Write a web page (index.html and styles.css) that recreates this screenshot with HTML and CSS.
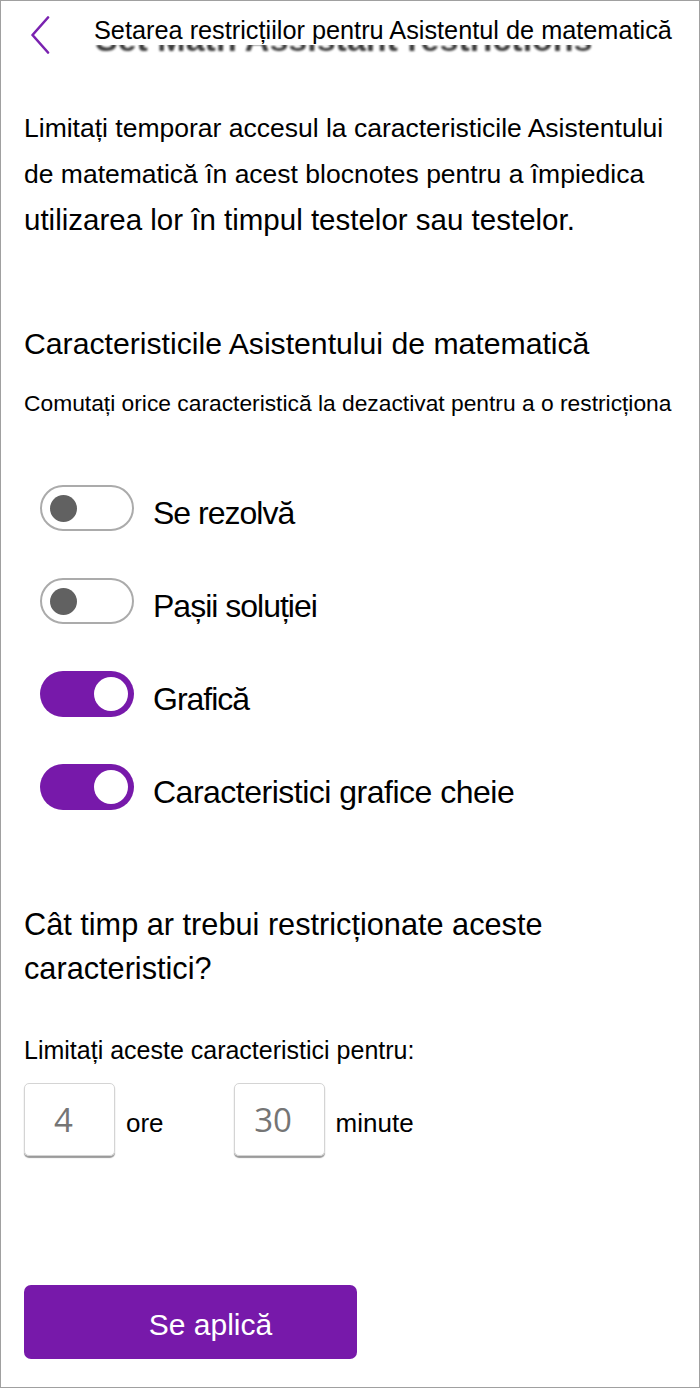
FILE: index.html
```html
<!DOCTYPE html>
<html lang="ro">
<head>
<meta charset="utf-8">
<title>Setarea restricțiilor pentru Asistentul de matematică</title>
<link rel="stylesheet" href="styles.css">
</head>
<body>
<div class="frame">
  <header class="header">
    <svg class="back" width="22" height="38" viewBox="0 0 22 38" aria-hidden="true">
      <path d="M19 1.5 L3.5 19 L19 36.5" fill="none" stroke="#7a22b0" stroke-width="2.6" stroke-linecap="round" stroke-linejoin="round"/>
    </svg>
    <div class="title-wrap">
      <span class="ghost" aria-hidden="true">Set Math Assistant restrictions</span>
      <h1 class="title">Setarea restricțiilor pentru Asistentul de matematică</h1>
    </div>
  </header>

  <main class="content">
    <p class="intro">Limitați temporar accesul la caracteristicile Asistentului de matematică în acest blocnotes pentru a împiedica <span class="intro-tail">utilizarea lor în timpul testelor sau testelor.</span></p>

    <h2 class="section-title">Caracteristicile Asistentului de matematică</h2>
    <p class="section-sub">Comutați orice caracteristică la dezactivat pentru a o restricționa</p>

    <ul class="toggles">
      <li class="toggle-row"><span class="toggle off"><span class="knob"></span></span><span class="toggle-label">Se rezolvă</span></li>
      <li class="toggle-row"><span class="toggle off"><span class="knob"></span></span><span class="toggle-label">Pașii soluției</span></li>
      <li class="toggle-row"><span class="toggle on"><span class="knob"></span></span><span class="toggle-label">Grafică</span></li>
      <li class="toggle-row"><span class="toggle on"><span class="knob"></span></span><span class="toggle-label wide">Caracteristici grafice cheie</span></li>
    </ul>

    <h2 class="question">Cât timp ar trebui restricționate aceste caracteristici?</h2>
    <p class="limit-label">Limitați aceste caracteristici pentru:</p>

    <div class="duration">
      <span class="num-box">4</span>
      <span class="unit">ore</span>
      <span class="num-box second">30</span>
      <span class="unit">minute</span>
    </div>

    <button class="apply" type="button">Se aplică</button>
  </main>
</div>
</body>
</html>
```

FILE: styles.css
```css
* { box-sizing: border-box; }

html, body {
  margin: 0;
  padding: 0;
  background: #ffffff;
}

body {
  font-family: "Liberation Sans", Arial, sans-serif;
  color: #000000;
}

.frame {
  width: 700px;
  height: 1388px;
  border: 1px solid #a0a0a0;
  background: #ffffff;
  overflow: hidden;
}

/* Header */
.header {
  display: flex;
  align-items: flex-start;
  height: 54px;
  padding-left: 28px;
}

.back {
  flex: none;
  margin-top: 15px;
}

.title-wrap {
  position: relative;
  margin-left: 43px;
  margin-top: 14px;
}

.ghost {
  position: absolute;
  left: 1px;
  top: 7px;
  font-size: 34px;
  line-height: 34px;
  font-weight: bold;
  white-space: nowrap;
  color: #3a3a3a;
  filter: blur(0.8px);
  z-index: 0;
}

.title {
  position: relative;
  z-index: 1;
  margin: 0;
  font-size: 25.3px;
  line-height: 30px;
  font-weight: normal;
  white-space: nowrap;
  background: #ffffff;
}

/* Content */
.content {
  padding: 0 20px 0 23px;
}

.intro {
  margin: 50px 0 0;
  font-size: 26.5px;
  line-height: 46px;
}

.intro-tail {
  font-size: 29.5px;
}

.section-title {
  margin: 82px 0 0;
  font-size: 30.2px;
  line-height: 36px;
  font-weight: normal;
}

.section-sub {
  margin: 27px 0 0;
  font-size: 22.8px;
  line-height: 28px;
  white-space: nowrap;
}

.toggles {
  list-style: none;
  margin: 68px 0 0;
  padding: 0 0 0 16px;
  display: flex;
  flex-direction: column;
  gap: 47px;
}

.toggle-row {
  display: flex;
  align-items: center;
  gap: 19px;
  height: 46px;
}

.toggle {
  flex: none;
  display: flex;
  align-items: center;
  width: 94px;
  height: 46px;
  border-radius: 23px;
}

.toggle.off {
  border: 2px solid #ababab;
  background: #ffffff;
  padding-left: 8px;
}

.toggle.off .knob {
  width: 27px;
  height: 27px;
  border-radius: 50%;
  background: #616161;
}

.toggle.on {
  background: #7719aa;
  justify-content: flex-end;
  padding-right: 6px;
}

.toggle.on .knob {
  width: 34px;
  height: 34px;
  border-radius: 50%;
  background: #ffffff;
}

.toggle-label {
  font-size: 32px;
  letter-spacing: -1px;
  padding-top: 11px;
  white-space: nowrap;
}

.toggle-label.wide {
  letter-spacing: -0.5px;
}

.question {
  margin: 93px 0 0;
  font-size: 30.7px;
  line-height: 44px;
  font-weight: normal;
}

.limit-label {
  margin: 45px 0 0;
  font-size: 25px;
  line-height: 28px;
}

.duration {
  display: flex;
  align-items: center;
  margin-top: 19px;
  height: 73px;
}

.num-box {
  flex: none;
  display: flex;
  align-items: center;
  justify-content: center;
  width: 91px;
  height: 73px;
  padding-right: 12px;
  border: 1px solid #d4d4d4;
  border-radius: 5px;
  box-shadow: 0 2px 1px #9a9a9a;
  font-family: "Open Sans", "Liberation Sans", sans-serif;
  font-size: 33px;
  color: #757575;
}

.num-box.second {
  margin-left: 70px;
}

.unit {
  margin-left: 11px;
  font-size: 26px;
  padding-top: 8px;
}

.apply {
  display: block;
  margin: 129px 0 0;
  width: 333px;
  height: 74px;
  padding: 6px 0 0 40px;
  border: none;
  border-radius: 7px;
  background: #7719aa;
  color: #ffffff;
  font-family: "Liberation Sans", Arial, sans-serif;
  font-size: 30px;
}
```
